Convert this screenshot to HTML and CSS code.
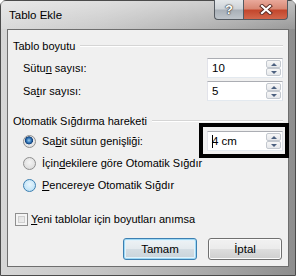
FILE: index.html
```html
<!DOCTYPE html>
<html lang="tr">
<head>
    <meta charset="UTF-8">
    <title>Tablo Ekle</title>
    <link rel="stylesheet" href="styles.css">
</head>
<body>
    <div class="window">
        <div class="titlebar">
            <div class="title">Tablo Ekle</div>
            <div class="caption-buttons">
                <div class="cap help">?</div>
                <div class="cap close">
                    <svg width="14" height="11" viewBox="0 0 14 11">
                        <path d="M3 2 L11 9 M11 2 L3 9" stroke="#5a2a22" stroke-width="4" stroke-linecap="square"/>
                        <path d="M3 2 L11 9 M11 2 L3 9" stroke="#fff" stroke-width="2.2" stroke-linecap="square"/>
                    </svg>
                </div>
            </div>
        </div>

        <div class="client">
            <div class="group-head">
                <span>Tablo boyutu</span>
                <div class="rule"></div>
            </div>
            <div class="row first">
                <span class="label">Sütu<u>n</u> sayısı:</span>
                <div class="spin">
                    <span class="val">10</span>
                    <div class="arrows"><i class="up"></i><i class="dn"></i></div>
                </div>
            </div>
            <div class="row">
                <span class="label">Sa<u>t</u>ır sayısı:</span>
                <div class="spin">
                    <span class="val">5</span>
                    <div class="arrows"><i class="up"></i><i class="dn"></i></div>
                </div>
            </div>

            <div class="group-head second">
                <span>Otomatik Sığdırma hareketi</span>
                <div class="rule"></div>
            </div>
            <div class="radio-row">
                <span class="radio checked"></span>
                <span class="radio-text">Sa<u>b</u>it sütun genişliği:</span>
                <div class="spin marked">
                    <span class="val"><span class="caret"></span>4 cm</span>
                    <div class="arrows"><i class="up"></i><i class="dn"></i></div>
                </div>
            </div>
            <div class="radio-row">
                <span class="radio"></span>
                <span class="radio-text">İçin<u>d</u>ekilere göre Otomatik Sığdır</span>
            </div>
            <div class="radio-row">
                <span class="radio hot"></span>
                <span class="radio-text"><u>P</u>encereye Otomatik Sığdır</span>
            </div>

            <div class="check-row">
                <span class="checkbox"></span>
                <span><u>Y</u>eni tablolar için boyutları anımsa</span>
            </div>

            <div class="buttons">
                <div class="btn default">Tamam</div>
                <div class="btn">İptal</div>
            </div>
        </div>
    </div>
</body>
</html>
```

FILE: styles.css
```css
body {
    margin: 0;
    font-family: "Liberation Sans", Arial, sans-serif;
    font-size: 11px;
    color: #000;
    background: #fff;
}
.window {
    width: 296px;
    height: 276px;
    box-sizing: border-box;
    border: 1px solid #4b4b4b;
    border-radius: 6px 6px 0 0;
    padding: 0 6px 8px 6px;
    background: linear-gradient(90deg, #d6d6d6 0%, #c4c4c4 35%, #a9a9a9 70%, #8e8e8e 100%);
    display: flex;
    flex-direction: column;
}
.titlebar {
    height: 28px;
    display: flex;
    align-items: flex-start;
    background: linear-gradient(180deg, rgba(255,255,255,0.45) 0%, rgba(255,255,255,0.1) 100%);
    margin: 0 -6px;
    padding: 0 7px 0 7px;
}
.title {
    line-height: 28px;
    font-size: 11.5px;
    padding-left: 1px;
}
.caption-buttons {
    margin-left: auto;
    margin-top: -1px;
    display: flex;
}
.cap {
    height: 20px;
    box-sizing: border-box;
    border: 1px solid #545a61;
    border-top: none;
    display: flex;
    align-items: center;
    justify-content: center;
}
.help {
    width: 29px;
    border-right: none;
    border-radius: 0 0 0 4px;
    background: linear-gradient(180deg, #e4e7ea 0%, #cdd2d7 48%, #a8afb7 52%, #bfc5cb 100%);
    color: #fff;
    font-weight: bold;
    font-size: 13px;
    text-shadow: 0 0 1px #333, 0 0 1px #333, 0 0 2px #444;
}
.close {
    width: 45px;
    border-radius: 0 0 4px 0;
    background: linear-gradient(180deg, #e9a99b 0%, #d88874 45%, #c3472d 55%, #d2674c 100%);
}

.client {
    flex: 1;
    background: #f0f0f0;
    border: 1px solid #6e6e6e;
    padding: 8px 5px 0 5px;
    display: flex;
    flex-direction: column;
}
.group-head {
    display: flex;
    align-items: center;
    height: 16px;
}
.group-head.second {
    margin-top: 12px;
}
.rule {
    flex: 1;
    margin-left: 5px;
    border-top: 1px solid #d5d5d5;
    border-bottom: 1px solid #fff;
}
.row {
    display: flex;
    align-items: center;
    justify-content: space-between;
    margin-top: 3px;
}
.row.first {
    margin-top: 4px;
}
.label {
    padding-left: 10px;
}
.spin {
    position: relative;
    width: 76px;
    height: 20px;
    box-sizing: border-box;
    border: 1px solid #abadb3;
    border-color: #abadb3 #dbdfe6 #e3e9ef #e2e3ea;
    background: #fff;
    display: flex;
}
.val {
    flex: 1;
    padding-left: 4px;
    line-height: 18px;
    font-size: 11.5px;
    display: flex;
    align-items: center;
}
.caret {
    width: 1px;
    height: 13px;
    background: #000;
    margin-right: -1px;
}
.arrows {
    width: 15px;
    display: flex;
    flex-direction: column;
    padding: 1px 1px 1px 0;
}
.arrows i {
    flex: 1;
    border: 1px solid #c3c8cf;
    border-radius: 2px;
    background: linear-gradient(180deg, #f7f7f7 0%, #e6e8eb 100%);
    display: flex;
    align-items: center;
    justify-content: center;
}
.arrows i::before {
    content: "";
    border-left: 3px solid transparent;
    border-right: 3px solid transparent;
}
.arrows .up::before {
    border-bottom: 3px solid #4c607f;
}
.arrows .dn::before {
    border-top: 3px solid #4c607f;
}
.spin.marked::after {
    content: "";
    position: absolute;
    left: -9px;
    right: -7px;
    top: -9px;
    bottom: -8px;
    border: 4px solid #000;
}

.radio-row {
    height: 22px;
    display: flex;
    align-items: center;
}
.group-head.second + .radio-row {
    margin-top: 1px;
}
.radio {
    width: 13px;
    height: 13px;
    box-sizing: border-box;
    border-radius: 50%;
    border: 1px solid #8f8f8f;
    background: radial-gradient(circle at 50% 40%, #f4f4f4 0%, #e2e2e2 60%, #d2d2d2 100%);
    margin-left: 10px;
    margin-right: 6px;
}
.radio.checked {
    background: radial-gradient(circle at 45% 40%, #9ed0f1 0%, #2c6fb2 28%, #123f78 42%, #e8e8e8 48%, #dcdcdc 100%);
}
.radio.hot {
    border-color: #3c7fb1;
    background: radial-gradient(circle at 50% 40%, #e9f6fd 0%, #c7e6f8 60%, #a8d6f2 100%);
}
.radio-text {
    flex: 1;
}
.check-row {
    display: flex;
    align-items: center;
    height: 18px;
    margin-top: 14px;
}
.checkbox {
    width: 13px;
    height: 13px;
    box-sizing: border-box;
    border: 1px solid #8f8f8f;
    background: linear-gradient(135deg, #dcdcdc 0%, #f4f4f4 100%);
    box-shadow: inset 0 0 0 2px #f4f4f4, inset 0 0 0 3px #cfcfcf;
    margin-left: 2px;
    margin-right: 3px;
}
.buttons {
    display: flex;
    justify-content: flex-end;
    gap: 11px;
    margin-top: 10px;
    padding-right: 1px;
}
.btn {
    width: 74px;
    height: 22px;
    box-sizing: border-box;
    border: 1px solid #707070;
    border-radius: 3px;
    background: linear-gradient(180deg, #f2f2f2 0%, #ebebeb 48%, #dddddd 52%, #cfcfcf 100%);
    box-shadow: inset 0 0 0 1px #fbfbfb;
    display: flex;
    align-items: center;
    justify-content: center;
    font-size: 11.5px;
}
.btn.default {
    border-color: #3c7fb1;
    box-shadow: inset 0 0 0 1px #9fd9f5, inset 0 0 0 2px #e3f2fa;
    background: linear-gradient(180deg, #eef3f6 0%, #e4eaee 48%, #d4dde3 52%, #c8d3da 100%);
}
```
